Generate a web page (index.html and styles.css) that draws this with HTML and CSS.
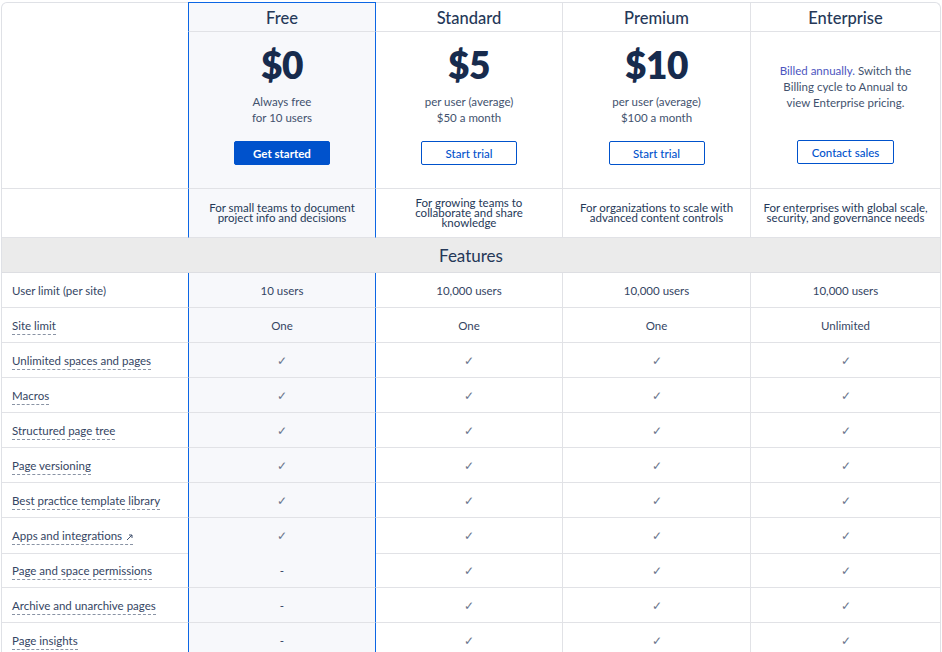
FILE: index.html
```html
<!DOCTYPE html>
<html lang="en">
<head>
<meta charset="utf-8">
<title>Pricing</title>
<link rel="stylesheet" href="styles.css">
</head>
<body>
<div class="table">
  <div class="cell blank span2"></div>
  <div class="cell title free top">Free</div>
  <div class="cell title std">Standard</div>
  <div class="cell title prem">Premium</div>
  <div class="cell title ent">Enterprise</div>

  <div class="cell price free">
    <div class="amount">$0</div>
    <div class="sub">Always free<br>for 10 users</div>
    <a class="btn primary">Get started</a>
  </div>
  <div class="cell price std">
    <div class="amount">$5</div>
    <div class="sub">per user (average)<br>$50 a month</div>
    <a class="btn">Start trial</a>
  </div>
  <div class="cell price prem">
    <div class="amount">$10</div>
    <div class="sub">per user (average)<br>$100 a month</div>
    <a class="btn">Start trial</a>
  </div>
  <div class="cell price ent">
    <div class="note"><span class="link">Billed annually.</span> Switch the<br>Billing cycle to Annual to<br>view Enterprise pricing.</div>
    <a class="btn">Contact sales</a>
  </div>

  <div class="cell desc blank"></div>
  <div class="cell desc free">For small teams to document<br>project info and decisions</div>
  <div class="cell desc std">For growing teams to<br>collaborate and share<br>knowledge</div>
  <div class="cell desc prem">For organizations to scale with<br>advanced content controls</div>
  <div class="cell desc ent">For enterprises with global scale,<br>security, and governance needs</div>

  <div class="section">Features</div>

  <div class="cell label"><span class="plain">User limit (per site)</span></div>
  <div class="cell val free">10 users</div>
  <div class="cell val std">10,000 users</div>
  <div class="cell val prem">10,000 users</div>
  <div class="cell val ent">10,000 users</div>

  <div class="cell label"><span class="dash">Site limit</span></div>
  <div class="cell val free">One</div>
  <div class="cell val std">One</div>
  <div class="cell val prem">One</div>
  <div class="cell val ent">Unlimited</div>

  <div class="cell label"><span class="dash">Unlimited spaces and pages</span></div>
  <div class="cell val free check">✓</div>
  <div class="cell val std check">✓</div>
  <div class="cell val prem check">✓</div>
  <div class="cell val ent check">✓</div>

  <div class="cell label"><span class="dash">Macros</span></div>
  <div class="cell val free check">✓</div>
  <div class="cell val std check">✓</div>
  <div class="cell val prem check">✓</div>
  <div class="cell val ent check">✓</div>

  <div class="cell label"><span class="dash">Structured page tree</span></div>
  <div class="cell val free check">✓</div>
  <div class="cell val std check">✓</div>
  <div class="cell val prem check">✓</div>
  <div class="cell val ent check">✓</div>

  <div class="cell label"><span class="dash">Page versioning</span></div>
  <div class="cell val free check">✓</div>
  <div class="cell val std check">✓</div>
  <div class="cell val prem check">✓</div>
  <div class="cell val ent check">✓</div>

  <div class="cell label"><span class="dash">Best practice template library</span></div>
  <div class="cell val free check">✓</div>
  <div class="cell val std check">✓</div>
  <div class="cell val prem check">✓</div>
  <div class="cell val ent check">✓</div>

  <div class="cell label tall"><span class="dash">Apps and integrations <svg class="ext" width="7" height="7" viewBox="0 0 7 7"><path d="M1 6 L6 1 M3 1 H6 V4" fill="none" stroke="#42526e" stroke-width="1"/></svg></span></div>
  <div class="cell val free check tall">✓</div>
  <div class="cell val std check tall">✓</div>
  <div class="cell val prem check tall">✓</div>
  <div class="cell val ent check tall">✓</div>

  <div class="cell label"><span class="dash">Page and space permissions</span></div>
  <div class="cell val free">-</div>
  <div class="cell val std check">✓</div>
  <div class="cell val prem check">✓</div>
  <div class="cell val ent check">✓</div>

  <div class="cell label"><span class="dash">Archive and unarchive pages</span></div>
  <div class="cell val free">-</div>
  <div class="cell val std check">✓</div>
  <div class="cell val prem check">✓</div>
  <div class="cell val ent check">✓</div>

  <div class="cell label"><span class="dash">Page insights</span></div>
  <div class="cell val free">-</div>
  <div class="cell val std check">✓</div>
  <div class="cell val prem check">✓</div>
  <div class="cell val ent check">✓</div>
</div>
</body>
</html>
```
FILE: styles.css
```css
html, body {
  margin: 0;
  padding: 0;
  background: #ffffff;
  overflow: hidden;
}
body {
  font-family: Lato, "Noto Sans", sans-serif;
  color: #172b4d;
}
.table {
  display: grid;
  grid-template-columns: 186px 188px 187px 188px 189px;
  grid-template-rows: 29px 157px 49px 35px;
  grid-auto-rows: 35px;
  width: 938px;
  margin: 2px 1px 0 1px;
  border: 1px solid #dfe1e6;
  border-bottom: none;
  border-radius: 6px 6px 0 0;
}
.cell {
  box-sizing: border-box;
  border-bottom: 1px solid #e1e2e6;
  display: flex;
  align-items: center;
  justify-content: center;
  text-align: center;
  min-width: 0;
}
.span2 { grid-row: span 2; }
.free {
  background: #f7f8fb;
  border-left: 1px solid #0c66e4;
  border-right: 1px solid #0c66e4;
}
.free.top { border-top: 1px solid #0c66e4; margin-top: -1px; }
.std, .prem { border-right: 1px solid #e1e2e6; }
.title {
  font-size: 16.5px;
  font-weight: 500;
  color: #253858;
  padding-top: 1px;
}
.price {
  flex-direction: column;
  justify-content: flex-start;
  padding-top: 13px;
}
.amount {
  font-size: 37px;
  font-weight: 800;
  line-height: 40px;
  color: #172b4d;
  letter-spacing: -0.5px;
}
.sub {
  margin-top: 9px;
  font-size: 11.5px;
  line-height: 16px;
  color: #42526e;
}
.note {
  margin-top: 18px;
  font-size: 11.5px;
  line-height: 16px;
  color: #42526e;
}
.link { color: #4c55c0; }
.btn {
  box-sizing: border-box;
  display: flex;
  align-items: center;
  justify-content: center;
  width: 96px;
  height: 24px;
  margin-top: 15px;
  border: 1px solid #0052cc;
  border-radius: 2px;
  color: #0052cc;
  background: #ffffff;
  font-size: 11.5px;
  font-weight: 500;
  cursor: pointer;
}
.ent .btn { margin-top: 29px; width: 97px; }
.btn.primary {
  background: #0052cc;
  color: #ffffff;
  font-weight: 700;
}
.desc {
  font-size: 11.5px;
  line-height: 10px;
  color: #253858;
}
.section {
  grid-column: 1 / -1;
  box-sizing: border-box;
  background: #ebebeb;
  border-bottom: 1px solid #dddee2;
  display: flex;
  align-items: center;
  justify-content: center;
  font-size: 17px;
  color: #253858;
}
.label {
  justify-content: flex-start;
  padding-left: 10px;
  font-size: 11.5px;
  color: #344563;
}
.dash {
  border-bottom: 1px dashed #8993a4;
  padding-bottom: 2px;
  margin-top: 3px;
  line-height: 13px;
}
.plain { line-height: 13px; }
.ext { margin-left: 1px; vertical-align: middle; }
.val {
  font-size: 11.5px;
  color: #344563;
}
.check {
  font-size: 12px;
  color: #6b778c;
}
.tall { height: 36px; }
```
